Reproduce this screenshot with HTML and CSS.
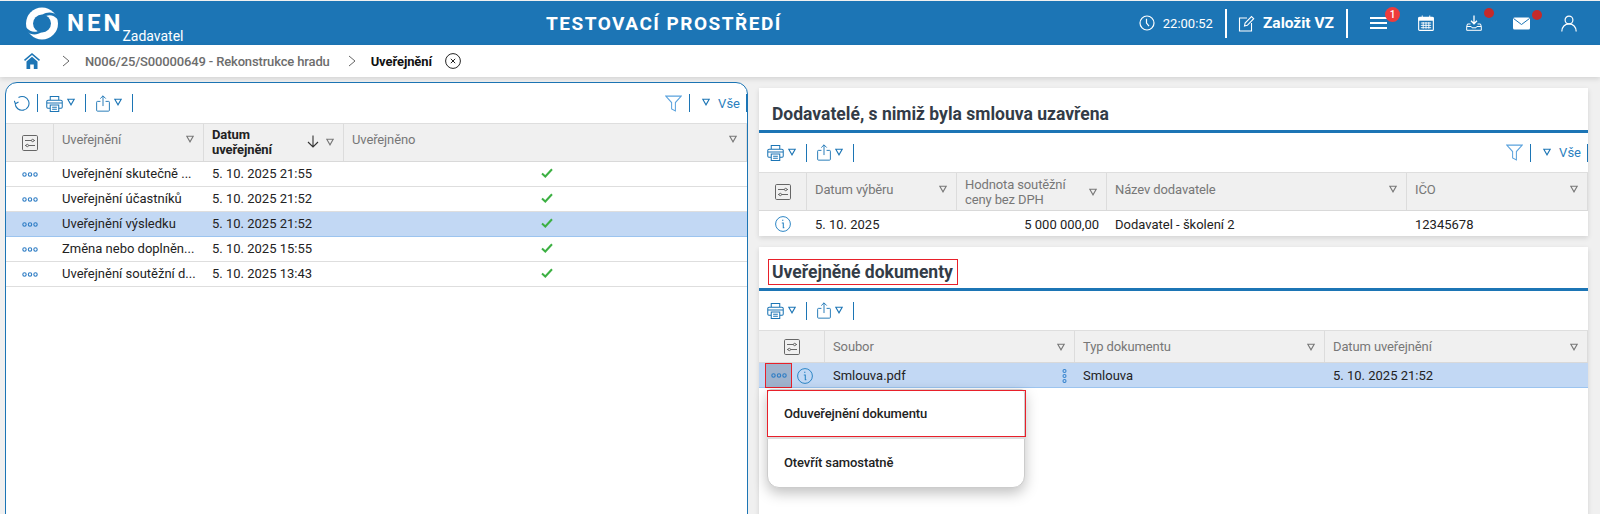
FILE: index.html
```html
<!DOCTYPE html>
<html lang="cs">
<head>
<meta charset="utf-8">
<title>NEN</title>
<link rel="stylesheet" href="styles.css">
</head>
<body>
<svg class="sprite" width="0" height="0">
  <symbol id="print" viewBox="0 0 18 18"><path d="M4.500 5.500V1.500h9v4M4.500 14H2a1.200 1.200 0 0 1-1.200-1.200V7A1.500 1.500 0 0 1 2.300 5.500h13.400A1.500 1.500 0 0 1 17.200 7v5.800A1.200 1.200 0 0 1 16 14h-2.500M1 8.500h16M4.500 10.500h9v7h-9zM6.500 13h5M6.500 15h5" fill="none" stroke="currentColor" stroke-width="1.100"/></symbol>
  <symbol id="share" viewBox="0 0 16 20"><path d="M5 7.500H1.500a1 1 0 0 0-1 1v9.500a1 1 0 0 0 1 1h13a1 1 0 0 0 1-1V8.500a1 1 0 0 0-1-1H11M8 13V1M4.800 4.200 8 1l3.200 3.200" fill="none" stroke="currentColor" stroke-width="1.100"/></symbol>
  <symbol id="tri" viewBox="0 0 8 8"><path d="M.8 1.200h6.400L4 6.800z" fill="none" stroke="currentColor" stroke-width="1.100"/></symbol>
  <symbol id="funnel" viewBox="0 0 18 18"><path d="M.8 1.200h16.400L11 8v8.800l-4-2V8z" fill="none" stroke="currentColor" stroke-width="1.100"/></symbol>
  <symbol id="settings" viewBox="0 0 16 16"><rect x=".5" y=".5" width="15" height="15" rx="1.200" fill="none" stroke="currentColor"/><path d="M3 5.500h6.500M12 5.500h1M3 10.500h1M6.500 10.500H13" stroke="currentColor" fill="none"/><circle cx="10.700" cy="5.500" r="1.200" fill="none" stroke="currentColor"/><circle cx="5.300" cy="10.500" r="1.200" fill="none" stroke="currentColor"/></symbol>
  <symbol id="dots" viewBox="0 0 16 5"><g fill="none" stroke="currentColor" stroke-width="1.100"><circle cx="2.500" cy="2.500" r="1.700"/><circle cx="8" cy="2.500" r="1.700"/><circle cx="13.500" cy="2.500" r="1.700"/></g></symbol>
  <symbol id="info" viewBox="0 0 16 16"><circle cx="8" cy="8" r="7.400" fill="none" stroke="currentColor"/><path d="M7 4.300h1.400M6.800 7h1.500v4.600h1" fill="none" stroke="currentColor" stroke-width="1.100"/></symbol>
  <symbol id="check" viewBox="0 0 12 10"><path d="M1 5.500 4.300 8.500 11 1.200" fill="none" stroke="currentColor" stroke-width="2"/></symbol>
</svg>

<header class="topbar">
  <div class="brand">
    <svg class="logo" viewBox="0 0 32 33" width="32" height="33"><circle cx="16" cy="16.500" r="16" fill="#fff"/><circle cx="16" cy="16.500" r="9" fill="#1c75b5"/><path d="M16 8C21.500 4.500 27 5 31 8.500L32.500 13C28.500 8.500 24 7 20 9z" fill="#1c75b5"/><path d="M16 25C10.500 28.500 5 28 1 24.500L-.5 20C3.500 24.500 8 26 12 24z" fill="#1c75b5"/></svg>
    <span class="brand-name">NEN</span>
    <span class="brand-role">Zadavatel</span>
  </div>
  <div class="env">TESTOVACÍ PROSTŘEDÍ</div>
  <div class="tools">
    <svg class="ic-clock" viewBox="0 0 16 16" width="16" height="16"><circle cx="8" cy="8" r="7" fill="none" stroke="#fff" stroke-width="1.200"/><path d="M7.500 3.800V8l2.500 3.200" fill="none" stroke="#fff" stroke-width="1.200"/></svg>
    <span class="clock">22:00:52</span>
    <span class="tool-sep"></span>
    <svg class="ic-edit" viewBox="0 0 17 17" width="17" height="17"><path d="M9 3H1.500v13h12V8M6.500 11l.6-3L13.500 1.500l2.200 2.200L9.300 10.300z" fill="none" stroke="#fff" stroke-width="1.100"/></svg>
    <span class="new-vz">Založit VZ</span>
    <span class="tool-sep"></span>
    <span class="tool t-menu"><svg viewBox="0 0 17 14" width="17" height="14"><path d="M0 2h17M0 7h17M0 12h17" stroke="#fff" stroke-width="2"/></svg><b class="count">1</b></span>
    <span class="tool t-cal"><svg viewBox="0 0 17 17" width="16" height="16"><rect x=".7" y="2.500" width="15.600" height="13.800" rx="1" fill="none" stroke="#fff" stroke-width="1.200"/><path d="M.7 3h15.600v2.500H.7zM4.500 .5v3M12.500 .5v3" fill="#fff" stroke="#fff"/><path d="M3 8.500h11M3 11h11M3 13.500h11M5.500 7.500v7M8.500 7.500v7M11.500 7.500v7" stroke="#fff" stroke-width="1"/></svg></span>
    <span class="tool t-down"><svg viewBox="0 0 16 16" width="16" height="16"><path d="M8 .5v8M5 5.800 8 8.800l3-3" fill="none" stroke="#fff" stroke-width="1.300"/><path d="M4.500 9H1.500L.7 11.500v3.800h14.600v-3.800L14.500 9h-3M.7 11.500h4.500l.8 1.300h4l.8-1.300h4.500" fill="none" stroke="#fff" stroke-width="1"/></svg><i class="dot"></i></span>
    <span class="tool t-mail"><svg viewBox="0 0 17 13" width="17" height="13"><rect y=".5" width="17" height="12" rx="1.500" fill="#fff"/><path d="M.5 1.500 8.500 7.500l8-6" fill="none" stroke="#1c75b5"/></svg><i class="dot"></i></span>
    <span class="tool t-user"><svg viewBox="0 0 16 17" width="16" height="17"><circle cx="8" cy="5" r="3.900" fill="none" stroke="#fff" stroke-width="1.200"/><path d="M.8 16.500c0-4.500 3-7.600 7.200-7.600s7.200 3.100 7.200 7.600" fill="none" stroke="#fff" stroke-width="1.200"/></svg></span>
  </div>
</header>

<nav class="crumbs">
  <svg class="home" viewBox="0 0 16 16" width="16" height="16"><path d="M8 0 0 6.800l1 1.200L8 2l7 6 1-1.200z" fill="#1c75b5"/><path d="M2.500 8.500 8 3.800l5.500 4.700V16H9.800v-4.500H6.200V16H2.500z" fill="#1c75b5"/></svg>
  <svg class="chev" viewBox="0 0 8 12" width="8" height="12"><path d="M1 1l6 5-6 5" fill="none" stroke="#666"/></svg>
  <span class="crumb">N006/25/S00000649 - Rekonstrukce hradu</span>
  <svg class="chev" viewBox="0 0 8 12" width="8" height="12"><path d="M1 1l6 5-6 5" fill="none" stroke="#666"/></svg>
  <span class="crumb current">Uveřejnění</span>
  <svg class="close" viewBox="0 0 16 16" width="16" height="16"><circle cx="8" cy="8" r="7.400" fill="none" stroke="#222"/><path d="M5.800 5.800l4.400 4.400M10.200 5.800l-4.400 4.400" stroke="#222"/></svg>
</nav>

<main class="content">
  <section class="left">
    <div class="toolbar">
      <svg class="ic refresh" viewBox="0 0 16 16" width="16" height="16"><path d="M4.500 2.500A6.900 6.900 0 1 1 1.200 8.500M.2 5.800 1.500 8.800 4.500 7" fill="none" stroke="currentColor" stroke-width="1.100"/></svg>
      <i class="bar"></i>
      <svg class="ic print"><use href="#print"/></svg><svg class="tri"><use href="#tri"/></svg>
      <i class="bar"></i>
      <svg class="ic share"><use href="#share"/></svg><svg class="tri"><use href="#tri"/></svg>
      <i class="bar"></i>
      <span class="grow"></span>
      <svg class="ic funnel"><use href="#funnel"/></svg>
      <i class="bar f"></i>
      <svg class="tri t-all"><use href="#tri"/></svg>
      <span class="all">Vše</span>
      <i class="bar e"></i>
    </div>
    <div class="grid g-left head">
      <div class="hc cog"><svg class="cfg"><use href="#settings"/></svg></div>
      <div class="hc"><span>Uveřejnění</span><svg class="tri"><use href="#tri"/></svg></div>
      <div class="hc two sorted"><span class="strong">Datum<br>uveřejnění</span><svg class="arrow" viewBox="0 0 12 13" width="12" height="13"><path d="M6 .5v11.500M1 7l5 5 5-5" fill="none" stroke="#333" stroke-width="1.100"/></svg><svg class="tri"><use href="#tri"/></svg></div>
      <div class="hc"><span>Uveřejněno</span><svg class="tri"><use href="#tri"/></svg></div>
    </div>
    <div class="grid g-left row">
      <div class="c ctr"><svg class="dots"><use href="#dots"/></svg></div><div class="c">Uveřejnění skutečně ...</div><div class="c">5. 10. 2025 21:55</div><div class="c ctr"><svg class="check"><use href="#check"/></svg></div>
    </div>
    <div class="grid g-left row">
      <div class="c ctr"><svg class="dots"><use href="#dots"/></svg></div><div class="c">Uveřejnění účastníků</div><div class="c">5. 10. 2025 21:52</div><div class="c ctr"><svg class="check"><use href="#check"/></svg></div>
    </div>
    <div class="grid g-left row sel">
      <div class="c ctr"><svg class="dots"><use href="#dots"/></svg></div><div class="c">Uveřejnění výsledku</div><div class="c">5. 10. 2025 21:52</div><div class="c ctr"><svg class="check"><use href="#check"/></svg></div>
    </div>
    <div class="grid g-left row">
      <div class="c ctr"><svg class="dots"><use href="#dots"/></svg></div><div class="c">Změna nebo doplněn...</div><div class="c">5. 10. 2025 15:55</div><div class="c ctr"><svg class="check"><use href="#check"/></svg></div>
    </div>
    <div class="grid g-left row">
      <div class="c ctr"><svg class="dots"><use href="#dots"/></svg></div><div class="c">Uveřejnění soutěžní d...</div><div class="c">5. 10. 2025 13:43</div><div class="c ctr"><svg class="check"><use href="#check"/></svg></div>
    </div>
  </section>

  <div class="right">
    <section class="card c1">
      <h2 class="title"><span>Dodavatelé, s nimiž byla smlouva uzavřena</span></h2>
      <div class="toolbar">
        <svg class="ic print"><use href="#print"/></svg><svg class="tri"><use href="#tri"/></svg>
        <i class="bar"></i>
        <svg class="ic share"><use href="#share"/></svg><svg class="tri"><use href="#tri"/></svg>
        <i class="bar"></i>
        <span class="grow"></span>
        <svg class="ic funnel"><use href="#funnel"/></svg>
        <i class="bar f"></i>
        <svg class="tri t-all"><use href="#tri"/></svg>
        <span class="all">Vše</span>
        <i class="bar e"></i>
      </div>
      <div class="grid g-sup head">
        <div class="hc cog"><svg class="cfg"><use href="#settings"/></svg></div>
        <div class="hc"><span>Datum výběru</span><svg class="tri"><use href="#tri"/></svg></div>
        <div class="hc two"><span>Hodnota soutěžní<br>ceny bez DPH</span><svg class="tri"><use href="#tri"/></svg></div>
        <div class="hc"><span>Název dodavatele</span><svg class="tri"><use href="#tri"/></svg></div>
        <div class="hc"><span>IČO</span><svg class="tri"><use href="#tri"/></svg></div>
      </div>
      <div class="grid g-sup row last">
        <div class="c ctr"><svg class="info"><use href="#info"/></svg></div><div class="c">5. 10. 2025</div><div class="c num">5 000 000,00</div><div class="c">Dodavatel - školení 2</div><div class="c">12345678</div>
      </div>
    </section>

    <section class="card c2">
      <h2 class="title marked"><span>Uveřejněné dokumenty</span></h2>
      <div class="toolbar">
        <svg class="ic print"><use href="#print"/></svg><svg class="tri"><use href="#tri"/></svg>
        <i class="bar"></i>
        <svg class="ic share"><use href="#share"/></svg><svg class="tri"><use href="#tri"/></svg>
        <i class="bar"></i>
      </div>
      <div class="grid g-doc head low">
        <div class="hc cog"><svg class="cfg"><use href="#settings"/></svg></div>
        <div class="hc"><span>Soubor</span><svg class="tri"><use href="#tri"/></svg></div>
        <div class="hc"><span>Typ dokumentu</span><svg class="tri"><use href="#tri"/></svg></div>
        <div class="hc"><span>Datum uveřejnění</span><svg class="tri"><use href="#tri"/></svg></div>
      </div>
      <div class="grid g-doc row sel">
        <div class="c acts"><span class="act-btn"><svg class="dots"><use href="#dots"/></svg></span><svg class="info"><use href="#info"/></svg></div>
        <div class="c file">Smlouva.pdf<svg class="vdots" viewBox="0 0 5 14" width="5" height="14"><g fill="none" stroke="#3a86cf" stroke-width="1.100"><circle cx="2.500" cy="2" r="1.500"/><circle cx="2.500" cy="7" r="1.500"/><circle cx="2.500" cy="12" r="1.500"/></g></svg></div>
        <div class="c">Smlouva</div>
        <div class="c">5. 10. 2025 21:52</div>
      </div>
      <div class="menu">
        <div class="mi first">Oduveřejnění dokumentu</div>
        <div class="mi">Otevřít samostatně</div>
      </div>
    </section>
  </div>
</main>
</body>
</html>
```
FILE: styles.css
```css
* { box-sizing: border-box; }
html, body { margin: 0; height: 514px; overflow: hidden; }
body { background: #f0f0f0; font-family: Roboto, "Liberation Sans", sans-serif; font-size: 13px; color: #222; }
.sprite { position: absolute; }
svg { display: block; flex: none; }

.topbar { height: 44px; margin-top: 1px; background: #1c75b5; color: #fff; display: flex; align-items: center; }
.brand { display: flex; align-items: flex-start; padding-left: 26px; height: 44px; width: 546px; flex: none; }
.logo { margin-top: 6px; }
.brand-name { font-weight: 700; font-size: 24px; letter-spacing: 3px; line-height: 28px; margin: 8px 0 0 9px; }
.brand-role { font-size: 14px; line-height: 16px; margin: 27px 0 0 -1px; }
.env { font-weight: 700; font-size: 19px; letter-spacing: 1.500px; }
.tools { display: flex; align-items: center; margin-left: auto; }
.ic-clock { margin-right: 8px; }
.clock { font-size: 13px; margin-right: 12px; }
.tool-sep { width: 2px; height: 29px; background: #fff; }
.ic-edit { margin: 0 8px 0 11px; }
.new-vz { font-weight: 700; font-size: 15.500px; margin-right: 12px; }
.tool { display: block; position: relative; }
.t-menu { margin-left: 22px; }
.t-cal { margin-left: 31px; }
.t-down { margin-left: 32px; }
.t-mail { margin-left: 31px; }
.t-user { margin: 0 23px 0 31px; }
.count { position: absolute; left: 15px; top: -9px; width: 15px; height: 15px; border-radius: 50%; background: #ee3b3b; font-size: 10px; font-weight: 500; line-height: 15px; text-align: center; }
.dot { position: absolute; top: -7px; left: 18px; width: 10px; height: 10px; border-radius: 50%; background: #c52a2a; }
.t-mail .dot { left: 19px; }

.crumbs { height: 32px; background: #fff; display: flex; align-items: center; padding-left: 24px; box-shadow: 0 2px 5px rgba(0,0,0,.12); position: relative; }
.chev { margin: 0 15px 0 22px; }
.crumb { color: #6d6d6d; font-weight: 500; letter-spacing: -.15px; }
.crumb + .chev { margin: 0 15px 0 18px; }
.crumb.current { color: #111; font-weight: 700; letter-spacing: -.1px; }
.close { margin-left: 13px; }

.content { display: flex; align-items: flex-start; padding: 5px 12px 0 5px; gap: 11px; }
.left { width: 743px; height: 440px; background: #fff; border: 1px solid #1c75b5; border-radius: 12px 12px 0 0; }
.right { flex: 1; display: flex; flex-direction: column; gap: 11px; padding-top: 6px; min-width: 0; }
.card { background: #fff; box-shadow: 0 2px 5px rgba(0,0,0,.12); position: relative; }
.c2 { height: 280px; }

.title { margin: 0; height: 45px; border-bottom: 3px solid #1c75b5; font-size: 17.500px; font-weight: 700; color: #333c47; padding: 14px 0 0 13px; line-height: 24px; }
.c2 .title { height: 44px; padding: 12px 0 0 9px; }
.marked span { display: inline-block; border: 1px solid #e8202a; padding: 0 4px 0 3px; height: 26px; line-height: 24px; }

.toolbar { height: 39px; display: flex; align-items: center; padding-left: 8px; color: #1c75b5; }
.left .toolbar { height: 40px; }
.grow { flex: 1; }
.bar { display: block; width: 1px; height: 18px; background: #1c75b5; flex: none; }
.ic { display: block; }
.refresh { margin-right: 7px; }
.toolbar .print { width: 17px; height: 17px; margin-left: 8px; }
.toolbar .share { width: 14px; height: 17px; margin-left: 10px; }
.card .print { margin-left: 0; }
.tri { width: 8px; height: 8px; color: #1c75b5; flex: none; }
.toolbar .tri { margin: -2px 10px 0 4px; }
.funnel { width: 17px; height: 17px; color: #5aa2dd; }
.bar.f { margin: 0 12px 0 7px; }
.toolbar .t-all { margin: -2px 8px 0 0; }
.all { font-size: 13px; color: #2b7fc0; margin-right: 6px; }

.grid { display: grid; }
.g-left { grid-template-columns: 48px 150px 140px 1fr; }
.g-sup { grid-template-columns: 48px 150px 150px 300px 1fr; }
.g-doc { grid-template-columns: 66px 250px 250px 1fr; }
.head { height: 39px; background: #f0f0f0; border-top: 1px solid #dedede; border-bottom: 1px solid #d9d9d9; }
.head.low { height: 33px; }
.hc { border-right: 1px solid #dcdcdc; display: flex; align-items: center; justify-content: space-between; padding: 0 9px 5px 8px; color: #777; line-height: 15px; letter-spacing: -.12px; }
.g-left .hc { padding-bottom: 7px; }
.low .hc { padding-bottom: 0; }
.hc.two { padding-bottom: 0; }
.g-left .hc.two { padding-bottom: 2px; }
.hc .tri { color: #777; }
.hc.cog, .g-left .hc.cog { justify-content: center; padding: 0; }
.cfg { width: 16px; height: 16px; color: #666; }
.sorted { justify-content: flex-start; }
.strong { color: #222; font-weight: 700; letter-spacing: -.1px; flex: 1; }
.arrow { margin-right: 7px; }
.row { height: 25px; border-bottom: 1px solid #dedede; align-items: center; }
.left .row { padding-bottom: 2px; }
.left .dots { margin-top: 2px; }
.row.sel { background: #c2d8f4; border-bottom: 1px solid #9cc4ef; }
.row.last { border-bottom: 0; padding-top: 1px; }
.c { padding: 0 8px; white-space: nowrap; overflow: hidden; }
.c.ctr { padding: 0; display: flex; justify-content: center; }
.g-left .c:last-child.ctr { padding-left: 3px; }
.c.num { text-align: right; }
.dots { width: 16px; height: 5px; color: #2d7cc4; }
.check { width: 12px; height: 10px; color: #3cb043; }
.info { width: 16px; height: 16px; color: #2d86c5; }

.acts { display: flex; align-items: center; padding: 0 0 0 6px; overflow: visible; }
.act-btn { width: 27px; height: 25px; background: #9fb3cd; border: 1px solid #e8202a; display: flex; align-items: center; justify-content: center; margin-right: 5px; }
.file { display: flex; align-items: center; justify-content: space-between; }

.menu { position: absolute; left: 8px; top: 142px; width: 258px; height: 99px; background: #fff; border: 1px solid #ccc; border-radius: 4px 4px 12px 12px; box-shadow: 0 5px 14px rgba(0,0,0,.25); font-weight: 500; letter-spacing: -.1px; color: #222; }
.mi { height: 49px; padding: 0 16px; display: flex; align-items: center; }
.mi.first { height: 47px; width: 259px; margin: 0 -2px 1px -1px; border: 1px solid #e8202a; box-shadow: 0 2px 0 #ddd; }
```
